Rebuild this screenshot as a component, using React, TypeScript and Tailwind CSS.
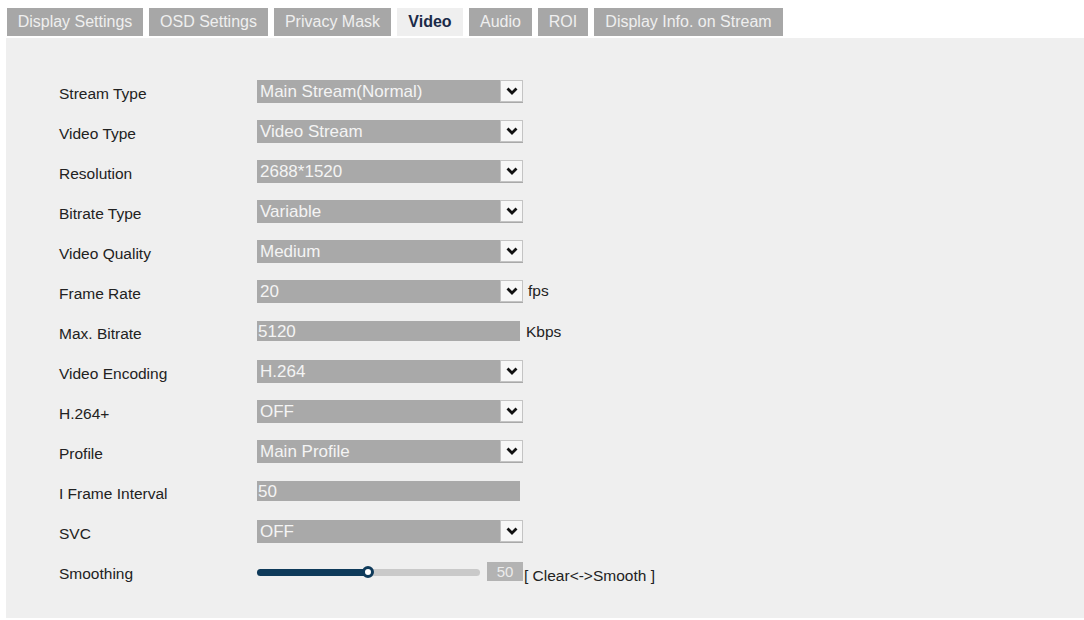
import React from "react";

const TABS = [
  { label: "Display Settings", w: "w-[136px]" },
  { label: "OSD Settings", w: "w-[119px]" },
  { label: "Privacy Mask", w: "w-[117px]" },
  { label: "Video", w: "w-[66px]", active: true },
  { label: "Audio", w: "w-[63px]" },
  { label: "ROI", w: "w-[50px]" },
  { label: "Display Info. on Stream", w: "w-[189px]" },
];

type Field =
  | { label: string; kind: "select"; value: string; unit?: string }
  | { label: string; kind: "input"; value: string; unit?: string }
  | { label: string; kind: "slider"; value: number };

const FIELDS: Field[] = [
  { label: "Stream Type", kind: "select", value: "Main Stream(Normal)" },
  { label: "Video Type", kind: "select", value: "Video Stream" },
  { label: "Resolution", kind: "select", value: "2688*1520" },
  { label: "Bitrate Type", kind: "select", value: "Variable" },
  { label: "Video Quality", kind: "select", value: "Medium" },
  { label: "Frame Rate", kind: "select", value: "20", unit: "fps" },
  { label: "Max. Bitrate", kind: "input", value: "5120", unit: "Kbps" },
  { label: "Video Encoding", kind: "select", value: "H.264" },
  { label: "H.264+", kind: "select", value: "OFF" },
  { label: "Profile", kind: "select", value: "Main Profile" },
  { label: "I Frame Interval", kind: "input", value: "50" },
  { label: "SVC", kind: "select", value: "OFF" },
  { label: "Smoothing", kind: "slider", value: 50 },
];

const TRACK = 223;

function Chevron() {
  return (
    <svg width="12" height="8" viewBox="0 0 12 8">
      <polyline points="1.5,1.5 6,6 10.5,1.5" fill="none" stroke="#111" strokeWidth="2.8" strokeLinejoin="miter" />
    </svg>
  );
}

function Select({ value }: { value: string }) {
  return (
    <div className="flex h-[23px] w-[266px] items-center bg-[#a9a9a9]">
      <span className="flex-1 pl-[3px] text-[17px] leading-none text-[#f4f4f4]">{value}</span>
      <div className="flex h-[22px] w-[23px] items-center justify-center border border-[#c4c4c4] bg-[#f7f7f7]">
        <Chevron />
      </div>
    </div>
  );
}

function TextBox({ value }: { value: string }) {
  return (
    <div className="flex h-[20px] w-[263px] items-center bg-[#a9a9a9] pl-[1px] text-[17px] leading-none text-[#f4f4f4]">
      {value}
    </div>
  );
}

function Slider({ value }: { value: number }) {
  // knob position along the track, in px
  const pos = Math.round((value / 100) * (TRACK - 2));
  return (
    <div className="flex items-end">
      <div className="relative mb-[5px] h-[7px] w-[223px] rounded-full bg-[#c9c9c9]">
        <div className="h-full rounded-full bg-[#0e3a5a]" style={{ width: `${pos}px` }} />
        <div
          className="absolute top-1/2 h-[12px] w-[12px] -translate-x-1/2 -translate-y-1/2 rounded-full border-[3px] border-[#0e3a5a] bg-white"
          style={{ left: `${pos}px` }}
        />
      </div>
      <div className="ml-[7px] flex h-[19px] w-[36px] items-center justify-center bg-[#b3b3b3] text-[15px] leading-none text-[#ececec]">
        {value}
      </div>
      <span className="mb-[-3px] ml-[1px] text-[15.5px] leading-none text-[#222]">[ Clear&lt;-&gt;Smooth ]</span>
    </div>
  );
}

export default function App() {
  return (
    <div className="h-[620px] w-[1084px] overflow-hidden bg-white font-['Liberation_Sans',Arial,sans-serif]">
      <div className="flex gap-[6px] pl-[7px] pt-[8px]">
        {TABS.map((t) => (
          <div
            key={t.label}
            className={
              t.active
                ? `${t.w} flex h-[28px] items-center justify-center bg-[#efefef] text-[16px] font-bold text-[#1b2a48]`
                : `${t.w} flex h-[28px] items-center justify-center bg-[#a7a7a7] text-[16px] text-[#efefef]`
            }
          >
            {t.label}
          </div>
        ))}
      </div>

      <div className="ml-[6px] mt-[2px] h-[580px] bg-[#efefef] pl-[53px] pt-[33px]">
        {FIELDS.map((f) => (
          <div key={f.label} className="flex h-[40px] items-center">
            <span className="mt-[6px] w-[198px] text-[15.5px] leading-none text-[#222]">{f.label}</span>
            {f.kind === "select" && <Select value={f.value} />}
            {f.kind === "input" && <TextBox value={f.value} />}
            {f.kind === "slider" && <Slider value={f.value} />}
            {f.kind !== "slider" && f.unit && (
              <span className={f.kind === "input" ? "ml-[6px] mt-[1px] text-[15.5px] text-[#222]" : "ml-[5px] text-[15.5px] text-[#222]"}>
                {f.unit}
              </span>
            )}
          </div>
        ))}
      </div>
    </div>
  );
}
